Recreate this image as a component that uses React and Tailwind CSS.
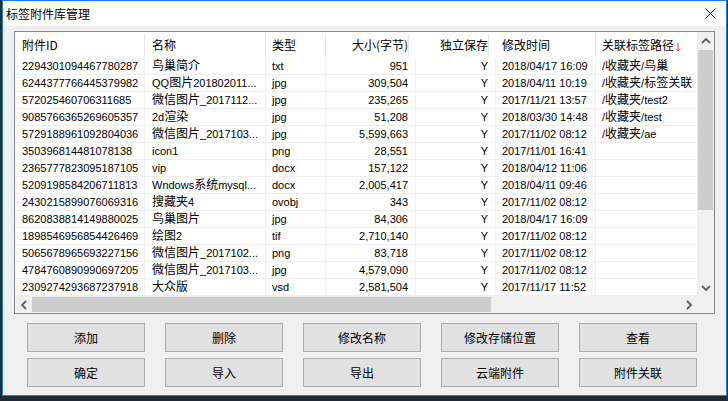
import React from "react";

const cols = [
    { key: "id", title: "附件ID", w: "w-[130px]", pad: "pl-[7px]", align: "text-left" },
    { key: "name", title: "名称", w: "w-[121px]", pad: "pl-[7px]", align: "text-left" },
    { key: "type", title: "类型", w: "w-[60px]", pad: "pl-[6px]", align: "text-left" },
    { key: "size", title: "大小(字节)", w: "w-[90px]", pad: "pr-[7px]", align: "text-right" },
    { key: "alone", title: "独立保存", w: "w-[80px]", pad: "pr-[7px]", align: "text-right" },
    { key: "time", title: "修改时间", w: "w-[100px]", pad: "pl-[6px]", align: "text-left" },
    { key: "path", title: "关联标签路径", w: "w-[101px]", pad: "pl-[6px]", align: "text-left" },
];

const rows = [
    ["2294301094467780287", "鸟巢简介", "txt", "951", "Y", "2018/04/17 16:09", "/收藏夹/鸟巢"],
    ["6244377766445379982", "QQ图片201802011...", "jpg", "309,504", "Y", "2018/04/11 10:19", "/收藏夹/标签关联"],
    ["572025460706311685", "微信图片_2017112...", "jpg", "235,265", "Y", "2017/11/21 13:57", "/收藏夹/test2"],
    ["9085766365269605357", "2d渲染", "jpg", "51,208", "Y", "2018/03/30 14:48", "/收藏夹/test"],
    ["5729188961092804036", "微信图片_2017103...", "jpg", "5,599,663", "Y", "2017/11/02 08:12", "/收藏夹/ae"],
    ["350396814481078138", "icon1", "png", "28,551", "Y", "2017/11/01 16:41", ""],
    ["2365777823095187105", "vip", "docx", "157,122", "Y", "2018/04/12 11:06", ""],
    ["5209198584206711813", "Wndows系统mysql...", "docx", "2,005,417", "Y", "2018/04/11 09:46", ""],
    ["2430215899076069316", "搜藏夹4", "ovobj", "343", "Y", "2017/11/02 08:12", ""],
    ["8620838814149880025", "鸟巢图片", "jpg", "84,306", "Y", "2018/04/17 16:09", ""],
    ["1898546956854426469", "绘图2", "tif", "2,710,140", "Y", "2017/11/02 08:12", ""],
    ["5065678965693227156", "微信图片_2017102...", "png", "83,718", "Y", "2017/11/02 08:12", ""],
    ["4784760890990697205", "微信图片_2017103...", "jpg", "4,579,090", "Y", "2017/11/02 08:12", ""],
    ["2309274293687237918", "大众版", "vsd", "2,581,504", "Y", "2017/11/17 11:52", ""],
];

const buttons = [
    ["添加", "删除", "修改名称", "修改存储位置", "查看"],
    ["确定", "导入", "导出", "云端附件", "附件关联"],
];

// chinese chars are drawn a bit bigger than the latin ones in the list
function CellText({ text }) {
    const parts = text.split(/([\u4e00-\u9fff]+)/).filter(Boolean);
    return parts.map((p, i) =>
        /[\u4e00-\u9fff]/.test(p)
            ? <span key={i} className="text-[12px]">{p}</span>
            : <span key={i}>{p}</span>
    );
}

function Chevron({ dir }) {
    const d = {
        up: "M1 6 L5 2 L9 6",
        down: "M1 2 L5 6 L9 2",
        left: "M6 1 L2 5 L6 9",
        right: "M2 1 L6 5 L2 9",
    }[dir];
    const vertical = dir === "up" || dir === "down";
    return (
        <svg width={vertical ? 10 : 8} height={vertical ? 8 : 10} viewBox={vertical ? "0 0 10 8" : "0 0 8 10"}>
            <path d={d} fill="none" stroke="#606060" strokeWidth="1.8" />
        </svg>
    );
}

export default function App() {
    return (
        <div className="w-[728px] h-[401px] bg-[#1f2c38] overflow-hidden font-['Liberation_Sans','Noto_Sans_CJK_SC',sans-serif] text-black">
            <div className="ml-[2px] w-[725px] h-[396px] border border-[#1883d7] bg-[#f0f0f0] flex flex-col">
                {/* title bar */}
                <div className="h-[25px] bg-white flex items-center justify-between shrink-0">
                    <span className="pl-[3px] text-[12px] font-['Noto_Sans_CJK_SC',sans-serif]">标签附件库管理</span>
                    <svg width="11" height="11" viewBox="0 0 11 11" className="mr-[10px]">
                        <path d="M0.5 0.5 L10.5 10.5 M10.5 0.5 L0.5 10.5" stroke="#000" strokeWidth="1" />
                    </svg>
                </div>

                <div className="flex-1 pl-[11px] pt-[5px]">
                    {/* list view */}
                    <div className="w-[701px] h-[283px] border border-[#828790] bg-white flex flex-col">
                        <div className="flex h-[264px]">
                            <div className="w-[682px] overflow-hidden">
                                <div className="flex h-[26px] text-[12px] font-['Noto_Sans_CJK_SC',sans-serif]">
                                    {cols.map((c, i) => (
                                        <div key={c.key} className={`${c.w} ${c.pad} shrink-0 flex items-center whitespace-nowrap`}>
                                            <div className={`flex items-center h-[23px] w-full ${c.align === "text-right" ? "justify-end" : ""} ${i < cols.length - 1 ? "border-r border-[#e5e5e5]" : ""}`}>
                                                <span>{c.title}</span>
                                                {c.key === "path" && (
                                                    <svg width="6" height="9" viewBox="0 0 6 9" className="ml-[1px] mt-[5px]">
                                                        <path d="M3 0 V8 M0.8 5.5 L3 8 L5.2 5.5" fill="none" stroke="#e04848" strokeWidth="1" />
                                                    </svg>
                                                )}
                                            </div>
                                        </div>
                                    ))}
                                </div>
                                {rows.map((r, ri) => (
                                    <div key={ri} className="flex h-[17px] text-[11px]">
                                        {cols.map((c, ci) => (
                                            <div
                                                key={c.key}
                                                className={`${c.w} ${c.pad} ${c.align} shrink-0 leading-[16px] whitespace-nowrap overflow-hidden border-b border-[#f0f0f0] ${ci < cols.length - 1 ? "border-r" : ""}`}
                                            >
                                                <CellText text={r[ci]} />
                                            </div>
                                        ))}
                                    </div>
                                ))}
                            </div>
                            {/* vertical scrollbar */}
                            <div className="w-[17px] bg-[#f0f0f0] flex flex-col">
                                <div className="h-[17px] flex items-center justify-center">
                                    <Chevron dir="up" />
                                </div>
                                <div className="flex-1 pt-[1px] pl-[1px]">
                                    <div className="h-[160px] w-[15px] bg-[#cdcdcd]" />
                                </div>
                                <div className="h-[17px] flex items-center justify-center">
                                    <Chevron dir="down" />
                                </div>
                            </div>
                        </div>
                        {/* horizontal scrollbar */}
                        <div className="flex h-[17px]">
                            <div className="w-[682px] bg-[#f0f0f0] flex items-center">
                                <div className="w-[17px] h-full flex items-center justify-center">
                                    <Chevron dir="left" />
                                </div>
                                <div className="w-[459px] h-[15px] bg-[#cdcdcd]" />
                                <div className="flex-1" />
                                <div className="w-[17px] h-full flex items-center justify-center">
                                    <Chevron dir="right" />
                                </div>
                            </div>
                            <div className="w-[17px] bg-[#f0f0f0]" />
                        </div>
                    </div>

                    {/* buttons */}
                    <div className="pl-[13px] pt-[9px] flex flex-col gap-[6px]">
                        {buttons.map((row, ri) => (
                            <div key={ri} className="flex gap-[20px]">
                                {row.map((b) => (
                                    <button
                                        key={b}
                                        className="w-[118px] h-[29px] bg-[#e1e1e1] border border-[#adadad] text-[12px] font-['Noto_Sans_CJK_SC',sans-serif] flex items-center justify-center"
                                    >
                                        {b}
                                    </button>
                                ))}
                            </div>
                        ))}
                    </div>
                </div>
            </div>
        </div>
    );
}
